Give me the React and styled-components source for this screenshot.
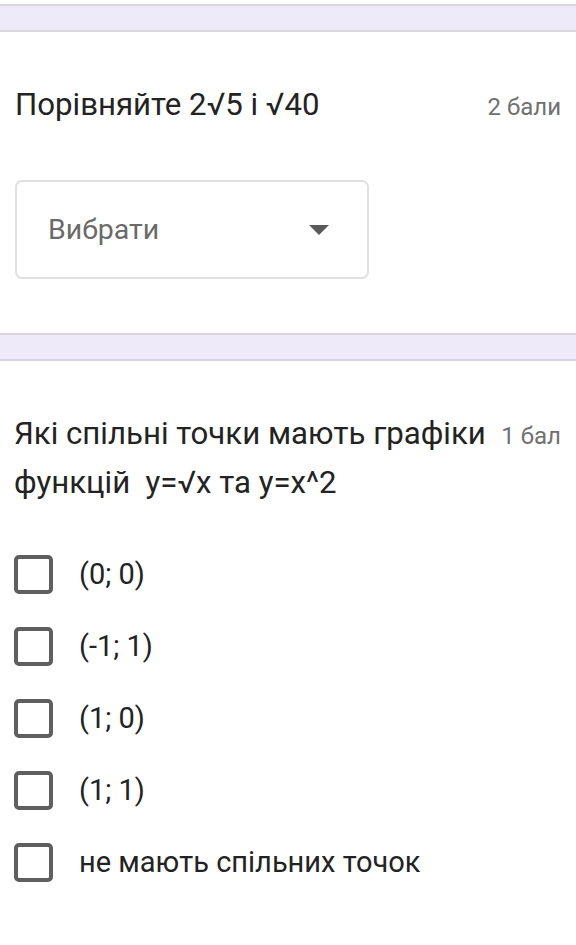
import React from 'react';
import styled, { createGlobalStyle } from 'styled-components';

const GlobalStyle = createGlobalStyle`
  body {
    margin: 0;
    background: #fff;
    font-family: Roboto, "Noto Sans", sans-serif;
  }
`;

const Divider = styled.div`
  height: 24px;
  background-color: #eeeaf9;
  border-top: 2px solid #d9d6e1;
  border-bottom: 2px solid #d9d6e1;
  margin-top: ${(p) => p.$top || 0}px;
`;

const Section = styled.section`
  padding: ${(p) => p.$pad};
`;

const Header = styled.div`
  display: flex;
  align-items: baseline;
  gap: 10px;
`;

const Title = styled.div`
  flex: 1;
  font-size: 31.2px;
  line-height: 49px;
  color: #232323;
  white-space: pre-wrap;
`;

const Points = styled.div`
  font-size: 24px;
  color: #707070;
  white-space: nowrap;
`;

const Select = styled.div`
  width: 354px;
  height: 99px;
  box-sizing: border-box;
  margin-top: 51px;
  border: 2px solid #e0e0e0;
  border-radius: 7px;
  display: flex;
  align-items: center;
  justify-content: space-between;
  padding: 0 38px 0 31px;
  font-size: 28.5px;
  color: #6a6a6a;
`;

const Caret = styled.div`
  width: 0;
  height: 0;
  border-left: 10px solid transparent;
  border-right: 10px solid transparent;
  border-top: 10px solid #5a5a5a;
`;

const Options = styled.div`
  margin-top: 31px;
  display: flex;
  flex-direction: column;
`;

const Option = styled.label`
  display: flex;
  align-items: center;
  height: 72px;
  gap: 26px;
  font-size: 29px;
  color: #232323;
`;

const Box = styled.span`
  width: 39px;
  height: 39px;
  box-sizing: border-box;
  border: 4px solid #5f5f5f;
  border-radius: 5px;
  flex-shrink: 0;
`;

const options = ['(0; 0)', '(-1; 1)', '(1; 0)', '(1; 1)', 'не мають спільних точок'];

export default function App() {
  return (
    <>
      <GlobalStyle />
      <Divider $top={4} />
      <Section $pad="48px 15px 54px 15px">
        <Header>
          <Title>Порівняйте 2√5 і √40</Title>
          <Points>2 бали</Points>
        </Header>
        <Select>
          <span>Вибрати</span>
          <Caret />
        </Select>
      </Section>
      <Divider />
      <Section $pad="48px 15px 60px 14px">
        <Header>
          <Title>{'Які спільні точки мають графіки функцій  y=√x та y=x^2'}</Title>
          <Points>1 бал</Points>
        </Header>
        <Options>
          {options.map((o) => (
            <Option key={o}>
              <Box />
              {o}
            </Option>
          ))}
        </Options>
      </Section>
    </>
  );
}
